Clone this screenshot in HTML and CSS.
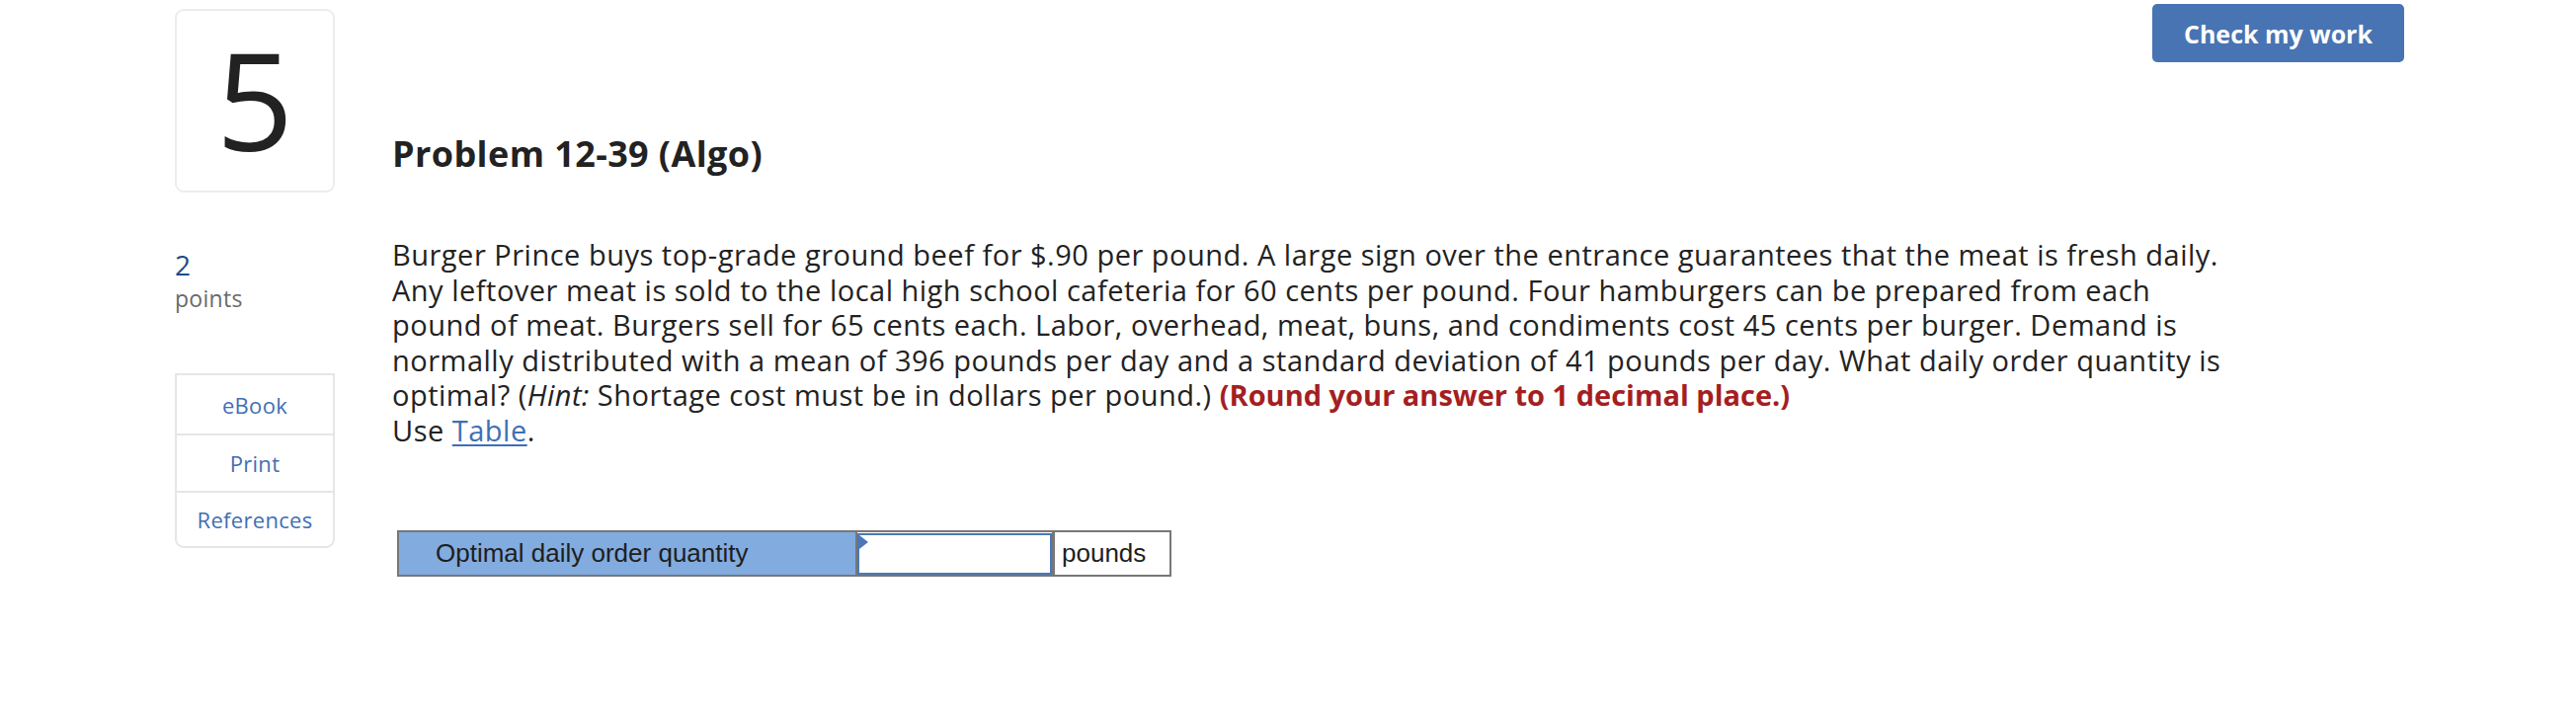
FILE: index.html
```html
<!DOCTYPE html>
<html lang="en">
<head>
<meta charset="utf-8">
<title>Problem 12-39 (Algo)</title>
<link rel="stylesheet" href="styles.css">
</head>
<body>
<div class="page">
  <aside class="side">
    <div class="qnum">5</div>
    <div class="score">
      <div class="score-value">2</div>
      <div class="score-label">points</div>
    </div>
    <nav class="side-menu">
      <a class="side-item" href="#">eBook</a>
      <a class="side-item" href="#">Print</a>
      <a class="side-item" href="#">References</a>
    </nav>
  </aside>
  <main class="main">
    <div class="toolbar">
      <button class="check-btn" type="button">Check my work</button>
    </div>
    <h2 class="title">Problem 12-39 (Algo)</h2>
    <p class="question">Burger Prince buys top-grade ground beef for $.90 per pound. A large sign over the entrance guarantees that the meat is fresh daily.<br>Any leftover meat is sold to the local high school cafeteria for 60 cents per pound. Four hamburgers can be prepared from each<br>pound of meat. Burgers sell for 65 cents each. Labor, overhead, meat, buns, and condiments cost 45 cents per burger. Demand is<br>normally distributed with a mean of 396 pounds per day and a standard deviation of 41 pounds per day. What daily order quantity is<br>optimal? (<em>Hint:</em> Shortage cost must be in dollars per pound.) <strong class="round">(Round your answer to 1 decimal place.)</strong><br>Use <a class="link" href="#">Table</a>.</p>
    <div class="answer">
      <div class="answer-label">Optimal daily order quantity</div>
      <div class="answer-input-cell">
        <input class="answer-input" type="text" aria-label="Optimal daily order quantity">
        <span class="flag"></span>
      </div>
      <div class="answer-unit">pounds</div>
    </div>
  </main>
</div>
</body>
</html>
```

FILE: styles.css
```css
html, body {
  margin: 0;
  padding: 0;
  background: #ffffff;
}

body {
  font-family: "Open Sans", "Lato", sans-serif;
  color: #222222;
}

.page {
  padding: 0 174px 0 177px;
  display: grid;
  grid-template-columns: 162px 1fr;
  column-gap: 58px;
}

/* ---------- left column ---------- */
.side {
  display: flex;
  flex-direction: column;
}

.qnum {
  margin-top: 9px;
  height: 186px;
  box-sizing: border-box;
  border: 2px solid #ececec;
  border-radius: 9px;
  display: flex;
  align-items: center;
  justify-content: center;
  font-size: 137px;
  line-height: 1;
  color: #222222;
  padding-bottom: 4px;
}

.score {
  margin-top: 54px;
}

.score-value {
  font-size: 28px;
  line-height: 38px;
  color: #1e4a87;
}

.score-label {
  font-size: 23px;
  line-height: 30px;
  letter-spacing: 0.3px;
  color: #6a6a6a;
}

.side-menu {
  margin-top: 61px;
  display: flex;
  flex-direction: column;
  border: 2px solid #e6e6e6;
  border-radius: 0 0 9px 9px;
}

.side-item {
  display: flex;
  align-items: center;
  justify-content: center;
  height: 56px;
  border-top: 2px solid #e6e6e6;
  font-size: 22px;
  letter-spacing: 0.3px;
  color: #3f6fb4;
  text-decoration: none;
}

.side-item:first-child {
  border-top: none;
  height: 59px;
}

.side-item:last-child {
  height: 54px;
}

/* ---------- main column ---------- */
.main {
  display: flex;
  flex-direction: column;
  align-items: flex-start;
}

.toolbar {
  align-self: stretch;
  display: flex;
  justify-content: flex-end;
  padding-top: 4px;
}

.check-btn {
  width: 255px;
  height: 59px;
  border: none;
  border-radius: 5px;
  background: #4874b3;
  color: #ffffff;
  font-family: "Open Sans", "Lato", sans-serif;
  font-weight: 700;
  font-size: 25px;
  cursor: pointer;
}

.title {
  margin: 72px 0 0 0;
  font-size: 36px;
  line-height: 42px;
  letter-spacing: 0.4px;
  font-weight: 700;
  color: #222222;
}

.question {
  margin: 63px 0 0 0;
  width: 1960px;
  font-size: 29px;
  line-height: 35.6px;
  letter-spacing: 0.5px;
  color: #222222;
}

.question em {
  font-style: italic;
}

.round {
  color: #a51e22;
  font-weight: 700;
  letter-spacing: 0;
}

.link {
  color: #3f6fb4;
  text-decoration: underline;
  text-underline-offset: 3px;
}

/* ---------- answer row ---------- */
.answer {
  margin-top: 83px;
  margin-left: 5px;
  display: flex;
  border: 2px solid #777777;
  height: 43px;
  font-family: "Liberation Sans", Arial, sans-serif;
  font-size: 26px;
  color: #1e1e1e;
}

.answer-label {
  width: 464px;
  box-sizing: border-box;
  padding-left: 37px;
  background: #82abdf;
  border-right: 2px solid #777777;
  display: flex;
  align-items: center;
}

.answer-input-cell {
  position: relative;
  width: 197px;
  padding-top: 1px;
  border-right: 3px solid #777777;
}

.answer-input {
  display: block;
  width: 197px;
  height: 42px;
  box-sizing: border-box;
  margin: 0;
  border: 2px solid #4a78b8;
  background: #ffffff;
  outline: none;
}

.flag {
  position: absolute;
  left: 2px;
  top: 3px;
  width: 0;
  height: 0;
  border-top: 7px solid transparent;
  border-bottom: 7px solid transparent;
  border-left: 9px solid #4a78b8;
}

.answer-unit {
  width: 116px;
  box-sizing: border-box;
  padding-left: 7px;
  background: #ffffff;
  display: flex;
  align-items: center;
}
```
